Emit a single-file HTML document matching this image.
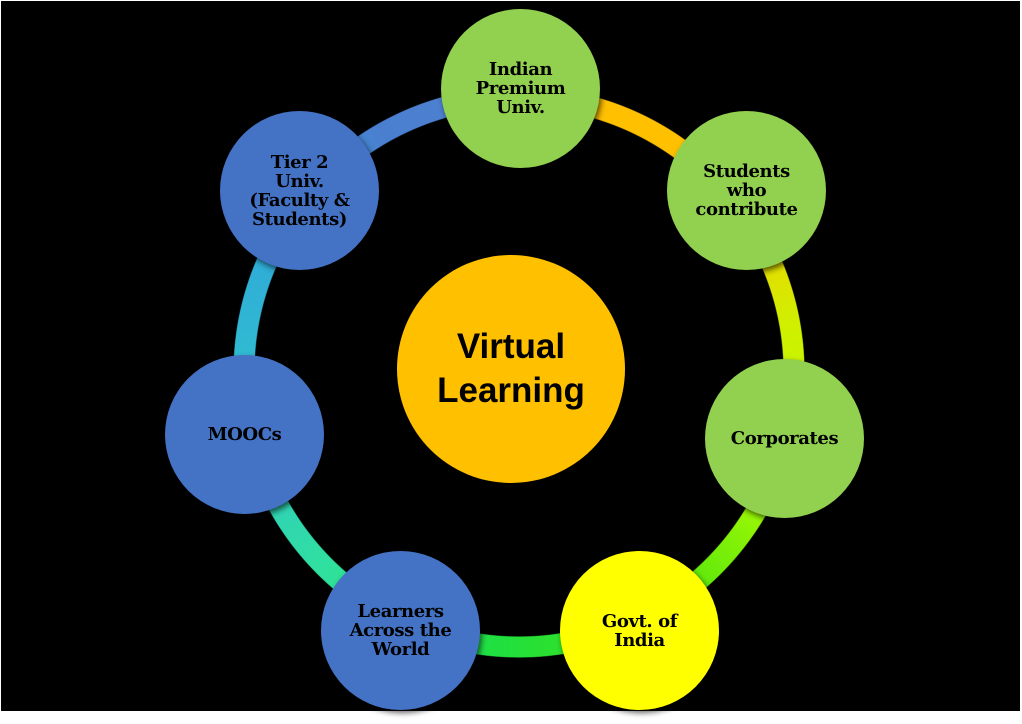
<!DOCTYPE html>
<html><head><meta charset="utf-8"><style>
html,body{margin:0;padding:0;background:#fff;width:1022px;height:724px;overflow:hidden}
#bg{position:absolute;left:1px;top:1px;width:1019px;height:710px;background:#000}
#ring{position:absolute;left:233px;top:86px;width:572px;height:572px;border-radius:50%;
background:conic-gradient(from 0deg,#ffc000 0deg,#ffc000 45deg,#d0f000 80deg,#b8ff00 110deg,#40e010 150deg,#20e040 185deg,#30e0a0 225deg,#30c0d0 265deg,#30a8d8 300deg,#4a7fd0 330deg,#5080d0 359deg,#ffc000 360deg);
-webkit-mask:radial-gradient(circle,transparent 264px,#000 265px,#000 285px,transparent 286px);
mask:radial-gradient(circle,transparent 264px,#000 265px,#000 285px,transparent 286px)}
.c{position:absolute;width:159px;height:159px;border-radius:50%;display:flex;align-items:center;justify-content:center;text-align:center;
font-family:"DejaVu Serif","Liberation Serif",serif;font-weight:bold;font-size:18px;line-height:19px;color:#000;letter-spacing:-0.4px;box-shadow:2px 3px 6px rgba(0,0,0,.6)}
.g{background:#92d050}.b{background:#4472c4}.y{background:#ffff00}
#mid{position:absolute;left:397px;top:255px;width:228px;height:228px;border-radius:50%;background:#ffc000;display:flex;align-items:center;justify-content:center;text-align:center;
font-family:"Liberation Sans","DejaVu Sans",sans-serif;font-weight:bold;font-size:35px;line-height:44px;color:#000}
</style></head><body>
<div id="bg"></div>
<div id="ring"></div>
<div id="mid">Virtual<br>Learning</div>
<div class="c g" style="left:441px;top:9px">Indian<br>Premium<br>Univ.</div>
<div class="c g" style="left:667px;top:111px">Students<br>who<br>contribute</div>
<div class="c g" style="left:705px;top:359px">Corporates</div>
<div class="c y" style="left:560px;top:551px">Govt. of<br>India</div>
<div class="c b" style="left:321px;top:551px">Learners<br>Across the<br>World</div>
<div class="c b" style="left:165px;top:355px">MOOCs</div>
<div class="c b" style="left:220px;top:111px">Tier 2<br>Univ.<br>(Faculty &amp;<br>Students)</div>
</body></html>
